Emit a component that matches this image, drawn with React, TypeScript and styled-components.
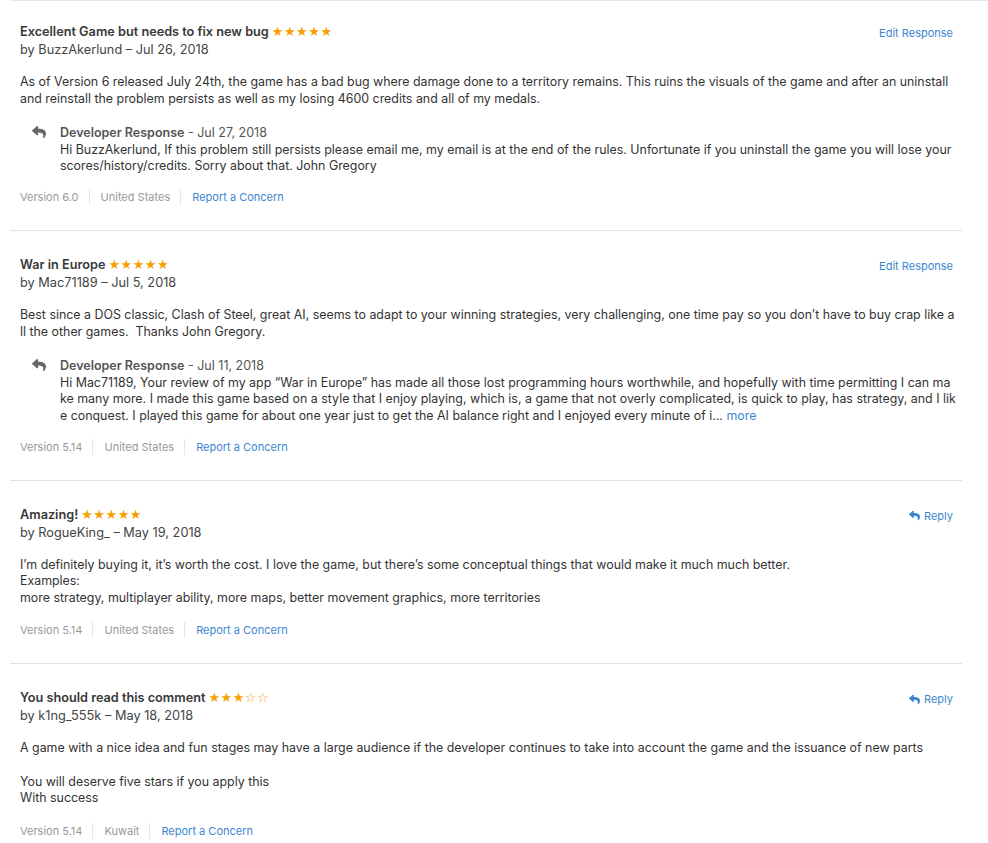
import { createGlobalStyle, styled } from "styled-components";
import { FaReply } from "react-icons/fa";

const GlobalStyle = createGlobalStyle`
  body {
    margin: 0;
    background: #fff;
    font-family: Inter, "Noto Sans", "Liberation Sans", sans-serif;
    color: #333;
  }
`;

type Review = {
  title: string;
  stars: number;
  author: string;
  date: string;
  body: string;
  action: "edit" | "reply";
  response?: { date: string; text: string; more?: boolean };
  version: string;
  country: string;
};

// line breaks follow the store page, which breaks words anywhere
const reviews: Review[] = [
  {
    title: "Excellent Game but needs to fix new bug",
    stars: 5,
    author: "BuzzAkerlund",
    date: "Jul 26, 2018",
    body: "As of Version 6 released July 24th, the game has a bad bug where damage done to a territory remains. This ruins the visuals of the game and after an uninstall\nand reinstall the problem persists as well as my losing 4600 credits and all of my medals.",
    action: "edit",
    response: {
      date: "Jul 27, 2018",
      text: "Hi BuzzAkerlund, If this problem still persists please email me, my email is at the end of the rules. Unfortunate if you uninstall the game you will lose your\nscores/history/credits. Sorry about that. John Gregory",
    },
    version: "6.0",
    country: "United States",
  },
  {
    title: "War in Europe",
    stars: 5,
    author: "Mac71189",
    date: "Jul 5, 2018",
    body: "Best since a DOS classic, Clash of Steel, great AI, seems to adapt to your winning strategies, very challenging, one time pay so you don\u2019t have to buy crap like a\nll the other games.  Thanks John Gregory.",
    action: "edit",
    response: {
      date: "Jul 11, 2018",
      text: "Hi Mac71189, Your review of my app \u201cWar in Europe\u201d has made all those lost programming hours worthwhile, and hopefully with time permitting I can ma\nke many more. I made this game based on a style that I enjoy playing, which is, a game that not overly complicated, is quick to play, has strategy, and I lik\ne conquest. I played this game for about one year just to get the AI balance right and I enjoyed every minute of i...",
      more: true,
    },
    version: "5.14",
    country: "United States",
  },
  {
    title: "Amazing!",
    stars: 5,
    author: "RogueKing_",
    date: "May 19, 2018",
    body: "I\u2019m definitely buying it, it\u2019s worth the cost. I love the game, but there\u2019s some conceptual things that would make it much much better.\nExamples:\nmore strategy, multiplayer ability, more maps, better movement graphics, more territories",
    action: "reply",
    version: "5.14",
    country: "United States",
  },
  {
    title: "You should read this comment",
    stars: 3,
    author: "k1ng_555k",
    date: "May 18, 2018",
    body: "A game with a nice idea and fun stages may have a large audience if the developer continues to take into account the game and the issuance of new parts\n\nYou will deserve five stars if you apply this\nWith success",
    action: "reply",
    version: "5.14",
    country: "Kuwait",
  },
];

const List = styled.div`
  margin-left: 10px;
  border-top: 1px solid #e8e8e8;
`;

const Card = styled.section`
  width: 933px;
  padding: 25px 9px 25px 10px;
  border-bottom: 1px solid #e3e3e3;

  &:first-child {
    padding-top: 22px;
  }
`;

const Header = styled.div`
  display: flex;
  justify-content: space-between;
  align-items: flex-start;
`;

const Title = styled.h3`
  margin: 0;
  font-size: 12.7px;
  line-height: 18px;
  font-weight: 600;
  color: #383838;
`;

const Stars = styled.span`
  margin-left: 3px;
  font-family: "DejaVu Sans", sans-serif;
  font-size: 13px;
  font-weight: normal;
  color: #f5a000;
  letter-spacing: 0.5px;
`;

const Byline = styled.div`
  font-size: 12.75px;
  line-height: 18px;
  color: #444;
`;

const ActionLink = styled.a`
  display: flex;
  align-items: center;
  gap: 4px;
  margin-top: 2px;
  font-size: 11px;
  line-height: 16px;
  color: #3b86d2;
  text-decoration: none;
  cursor: pointer;
`;

const Body = styled.p`
  margin: 15px 0 0;
  font-size: 12.4px;
  line-height: 16.6px;
  color: #333;
  white-space: pre;
`;

const Response = styled.div`
  display: flex;
  gap: 12px;
  margin: 18px 0 -2px;
  padding-left: 12px;
`;

const ResponseIcon = styled.div`
  flex: none;
  width: 16px;
  margin-top: -2px;
  color: #666;
`;

const ResponseContent = styled.div`
  flex: 1;
  font-size: 12.4px;
  line-height: 16.6px;
  color: #333;
  white-space: pre;
`;

const ResponseHead = styled.div`
  color: #555;
  font-size: 12.5px;

  strong {
    font-weight: 600;
  }
`;

const MoreLink = styled.a`
  color: #3b86d2;
  cursor: pointer;
`;

const Footer = styled.div`
  display: flex;
  align-items: center;
  margin-top: 16px;
  font-size: 11px;
  line-height: 16px;
`;

const FooterItem = styled.span<{ $link?: boolean }>`
  padding: 0 10px 0 11px;
  color: ${(p) => (p.$link ? "#3b86d2" : "#999")};
  border-left: 1px solid #e6e6e6;
  cursor: ${(p) => (p.$link ? "pointer" : "default")};

  &:first-child {
    padding-left: 0;
    border-left: none;
  }
`;

const starText = (n: number) => "\u2605".repeat(n) + "\u2606".repeat(5 - n);

const ReviewCard = ({ review }: { review: Review }) => (
  <Card>
    <Header>
      <div>
        <Title>
          {review.title}
          <Stars>{starText(review.stars)}</Stars>
        </Title>
        <Byline>
          by {review.author} – {review.date}
        </Byline>
      </div>
      {review.action === "edit" ? (
        <ActionLink>Edit Response</ActionLink>
      ) : (
        <ActionLink>
          <FaReply size={11} />
          Reply
        </ActionLink>
      )}
    </Header>
    <Body>{review.body}</Body>
    {review.response && (
      <Response>
        <ResponseIcon>
          <FaReply size={14} />
        </ResponseIcon>
        <ResponseContent>
          <ResponseHead>
            <strong>Developer Response</strong> - {review.response.date}
          </ResponseHead>
          {review.response.text}
          {review.response.more && (
            <>
              {" "}
              <MoreLink>more</MoreLink>
            </>
          )}
        </ResponseContent>
      </Response>
    )}
    <Footer>
      <FooterItem>Version {review.version}</FooterItem>
      <FooterItem>{review.country}</FooterItem>
      <FooterItem $link>Report a Concern</FooterItem>
    </Footer>
  </Card>
);

export default function App() {
  return (
    <>
      <GlobalStyle />
      <List>
        {reviews.map((r) => (
          <ReviewCard key={r.title} review={r} />
        ))}
      </List>
    </>
  );
}
